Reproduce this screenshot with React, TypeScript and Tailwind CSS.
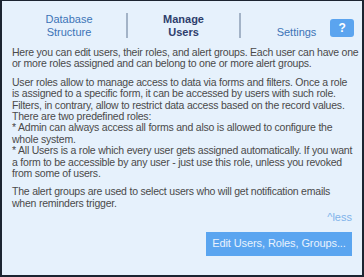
const lines1 = [
  "Here you can edit users, their roles, and alert groups. Each user can have one",
  "or more roles assigned and can belong to one or more alert groups.",
];

const lines2 = [
  "User roles allow to manage access to data via forms and filters. Once a role",
  "is assigned to a specific form, it can be accessed by users with such role.",
  "Filters, in contrary, allow to restrict data access based on the record values.",
  "There are two predefined roles:",
  "* Admin can always access all forms and also is allowed to configure the",
  "whole system.",
  "* All Users is a role which every user gets assigned automatically. If you want",
  "a form to be accessible by any user - just use this role, unless you revoked",
  "from some of users.",
];

const lines3 = [
  "The alert groups are used to select users who will get notification emails",
  "when reminders trigger.",
];

function Para({ lines, className = "" }: { lines: string[]; className?: string }) {
  return (
    <div className={className}>
      {lines.map((l, i) => (
        <div key={i} className="whitespace-nowrap">
          {l}
        </div>
      ))}
    </div>
  );
}

export default function App() {
  const font = { fontFamily: '"Liberation Sans", Arial, sans-serif' };
  return (
    <div
      style={font}
      className="w-[364px] h-[277px] bg-[#e6f1fc] border-t border-l-2 border-r-2 border-b-2 border-[#1c2431] text-[10.5px] leading-[11.4px] tracking-[-0.22px] text-[#4a4a4a] relative overflow-hidden"
    >
      <div className="flex items-end px-[10px] pt-[11px] h-[37px] text-[11px] tracking-normal leading-[12.5px]">
        <div className="w-[114px] text-center text-[#3d74b7]">
          <div>Database</div>
          <div>Structure</div>
        </div>
        <div className="w-[2px] h-[25px] bg-[#a3b3c7]"></div>
        <div className="w-[111px] text-center font-bold text-[#2e3e6c]">
          <div>Manage</div>
          <div>Users</div>
        </div>
        <div className="w-[2px] h-[25px] bg-[#a3b3c7]"></div>
        <div className="flex-1 text-center text-[#3d74b7]">
          <div>Settings</div>
        </div>
      </div>
      <button className="absolute right-[8px] top-[18px] w-[24px] h-[18px] rounded-[3px] bg-[#5ba4ef] text-white font-bold text-[12px] leading-[18px]">
        ?
      </button>
      <div className="pl-[10px] pr-[8px] pt-[9px]">
        <Para lines={lines1} />
        <Para lines={lines2} className="mt-[7px]" />
        <Para lines={lines3} className="mt-[7px]" />
        <div className="text-right text-[#7fb3ea] text-[11px] mt-[3px] pr-[2px] tracking-normal">^less</div>
        <div className="flex justify-end mt-[8px] pr-[2px]">
          <button className="w-[146px] h-[24px] bg-[#5aa5f0] text-[#e9f2fd] text-[11px] tracking-[-0.1px] whitespace-nowrap">
            Edit Users, Roles, Groups...
          </button>
        </div>
      </div>
    </div>
  );
}
